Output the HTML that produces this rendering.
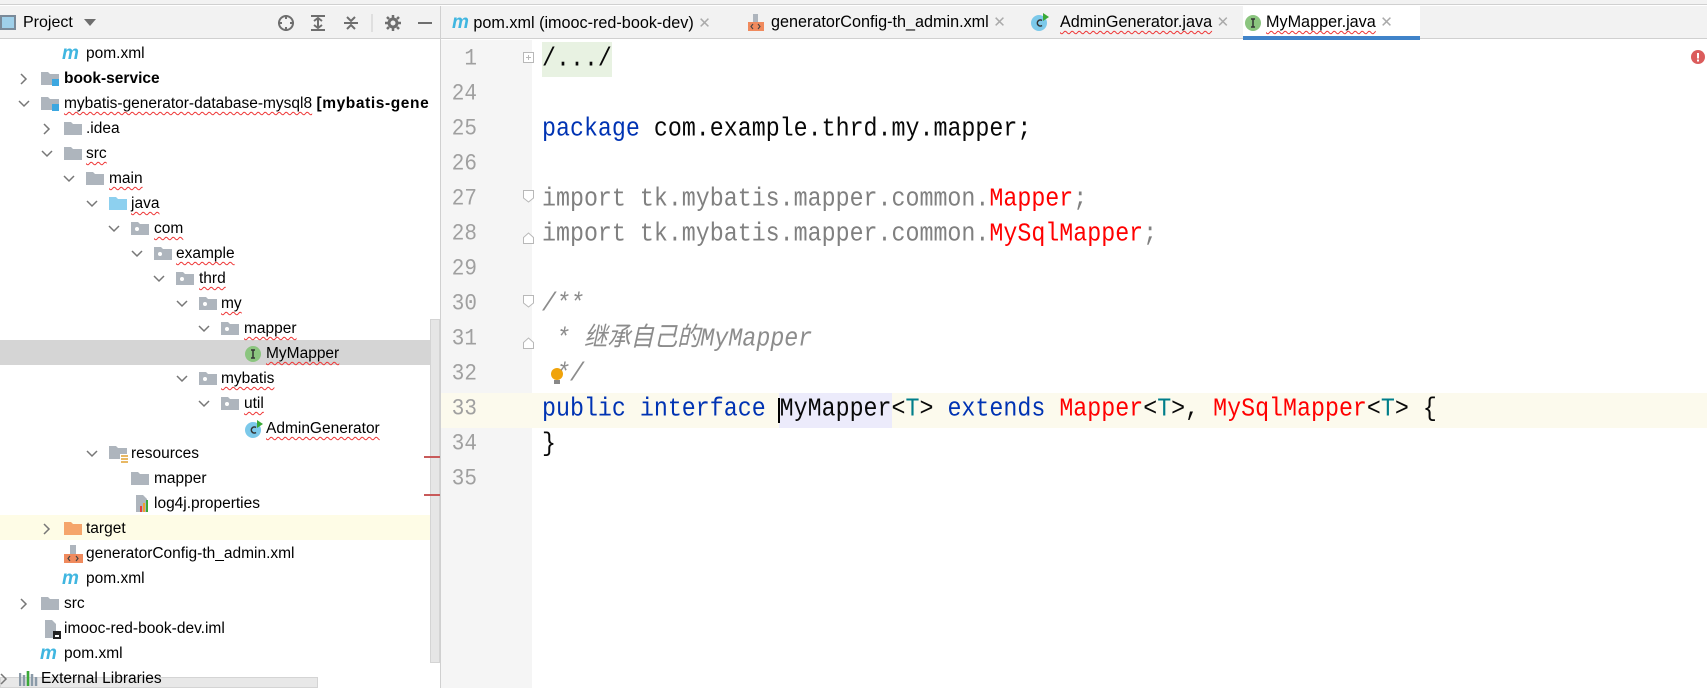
<!DOCTYPE html>
<html><head><meta charset="utf-8"><style>
*{margin:0;padding:0;box-sizing:border-box}
body{width:1707px;height:688px;overflow:hidden;background:#fff;font-family:"Liberation Sans","Noto Sans CJK SC",sans-serif;position:relative}
.a{position:absolute}
.row{position:absolute;left:0;width:430px;height:25px;font-size:15.5px;line-height:25px;color:#000;white-space:nowrap;overflow:hidden}
.row .t{position:absolute;top:0}
.row svg{position:absolute}
.sq{text-decoration:underline wavy #e33;text-decoration-thickness:1px;text-underline-offset:3px}
.ln{position:absolute;left:441px;width:36px;text-align:right;font-family:"Liberation Mono",monospace;font-size:21px;color:#a0a0a0;height:35px;line-height:35px;transform:scaleY(1.12)}
.cl{position:absolute;left:542px;font-family:"Liberation Mono","Noto Sans CJK SC",monospace;font-size:23.3px;height:35px;line-height:35px;white-space:pre;color:#080808;transform:scaleY(1.12);transform-origin:center}
.kw{color:#0033b3}.rd{color:#f00}.tp{color:#007e8a}.gr{color:#808080}.cm{color:#8c8c8c;font-style:italic}
.tab{position:absolute;top:6px;height:33px;line-height:33px;font-size:16.2px;color:#000;white-space:nowrap}
.x{color:#aaa;font-size:15px}
</style></head><body>
<div class="a" style="left:0;top:0;width:1707px;height:5px;background:#f2f2f2;border-bottom:1px solid #d0d0d0"></div>
<div class="a" style="left:0;top:6px;width:441px;height:33px;background:#f2f2f2;border-bottom:1px solid #d0d0d0"></div>
<div class="a" style="left:0;top:15px;width:16px;height:15px;border:2px solid #7a8a99;background:#9fd0ea"></div>
<div class="a" style="left:23px;top:11px;font-size:16px;line-height:24px">Project</div>
<svg class="a" style="left:84px;top:19px" width="12" height="8"><path d="M0 0L12 0L6 7Z" fill="#6e6e6e"/></svg>
<svg class="a" style="left:277px;top:14px" width="180" height="20" fill="none" stroke="#6e6e6e" stroke-width="2">
<circle cx="9" cy="9" r="7"/><path d="M9 1V5M9 13V17M1 9H5M13 9H17"/>
<path d="M34 2H48M34 16H48M37 7L41 4L45 7M37 11L41 14L45 11M41 4V14"/>
<path d="M67 9H81M70 3L74 7L78 3M70 15L74 11L78 15"/>
<path d="M95 0V18" stroke="#ccc" stroke-width="1"/>
<circle cx="116" cy="9" r="4" stroke-width="3"/><path d="M116 1V4M116 14V17M108 9H111M121 9H124M110 3L112 5M120 13L122 15M122 3L120 5M110 15L112 13" stroke-width="2.5"/>
<path d="M141 9H155"/>
</svg>
<div class="a" style="left:440px;top:6px;width:1px;height:682px;background:#d0d0d0"></div>

<div class="a" style="left:0;top:340px;width:430px;height:25px;background:#d5d5d5"></div>
<div class="a" style="left:0;top:515px;width:430px;height:25px;background:#fefce6"></div>
<div class="a" style="left:0;top:677px;width:318px;height:11px;background:#e8e8e8;border:1px solid #d4d4d4"></div>
<div class="a" style="left:430px;top:319px;width:10px;height:344px;background:#e6e6e6;border:1px solid #d4d4d4"></div>

<div class="row" style="top:41px"><span class="t" style="left:62px;color:#40b6e0;font-weight:bold;font-style:italic;font-size:19px">m</span><span class="t" style="left:86px">pom.xml</span></div>
<div class="row" style="top:66px"><svg style="left:20px;top:7px" width="8" height="12"><path d="M1 1L6 6L1 11" stroke="#777" stroke-width="1.5" fill="none"/></svg><svg style="left:41px;top:5px" width="20" height="16"><path d="M0 1H7L9 3H18V14H0Z" fill="#aeb5bd"/><rect x="11" y="8" width="7" height="7" fill="#3ca7e0"/></svg><span class="t" style="left:64px;font-weight:bold">book-service</span></div>
<div class="row" style="top:91px"><svg style="left:18px;top:9px" width="12" height="8"><path d="M1 1L6 6L11 1" stroke="#777" stroke-width="1.5" fill="none"/></svg><svg style="left:41px;top:5px" width="20" height="16"><path d="M0 1H7L9 3H18V14H0Z" fill="#aeb5bd"/><rect x="11" y="8" width="7" height="7" fill="#3ca7e0"/></svg><span class="t" style="left:64px"><span class="sq">mybatis-generator-database-mysql8</span> <b style="letter-spacing:0.6px">[mybatis-generator]</b></span></div>
<div class="row" style="top:116px"><svg style="left:43px;top:7px" width="8" height="12"><path d="M1 1L6 6L1 11" stroke="#777" stroke-width="1.5" fill="none"/></svg><svg style="left:64px;top:5px" width="20" height="16"><path d="M0 1H7L9 3H18V14H0Z" fill="#aeb5bd"/></svg><span class="t" style="left:86px">.idea</span></div>
<div class="row" style="top:141px"><svg style="left:41px;top:9px" width="12" height="8"><path d="M1 1L6 6L11 1" stroke="#777" stroke-width="1.5" fill="none"/></svg><svg style="left:64px;top:5px" width="20" height="16"><path d="M0 1H7L9 3H18V14H0Z" fill="#aeb5bd"/></svg><span class="t sq" style="left:86px">src</span></div>
<div class="row" style="top:166px"><svg style="left:63px;top:9px" width="12" height="8"><path d="M1 1L6 6L11 1" stroke="#777" stroke-width="1.5" fill="none"/></svg><svg style="left:86px;top:5px" width="20" height="16"><path d="M0 1H7L9 3H18V14H0Z" fill="#aeb5bd"/></svg><span class="t sq" style="left:109px">main</span></div>
<div class="row" style="top:191px"><svg style="left:86px;top:9px" width="12" height="8"><path d="M1 1L6 6L11 1" stroke="#777" stroke-width="1.5" fill="none"/></svg><svg style="left:109px;top:5px" width="20" height="16"><path d="M0 1H7L9 3H18V14H0Z" fill="#8dd0ef"/></svg><span class="t sq" style="left:131px">java</span></div>
<div class="row" style="top:216px"><svg style="left:108px;top:9px" width="12" height="8"><path d="M1 1L6 6L11 1" stroke="#777" stroke-width="1.5" fill="none"/></svg><svg style="left:131px;top:5px" width="20" height="16"><path d="M0 1H7L9 3H18V14H0Z" fill="#aeb5bd"/><circle cx="6" cy="8" r="2" fill="#fff"/></svg><span class="t sq" style="left:154px">com</span></div>
<div class="row" style="top:241px"><svg style="left:131px;top:9px" width="12" height="8"><path d="M1 1L6 6L11 1" stroke="#777" stroke-width="1.5" fill="none"/></svg><svg style="left:154px;top:5px" width="20" height="16"><path d="M0 1H7L9 3H18V14H0Z" fill="#aeb5bd"/><circle cx="6" cy="8" r="2" fill="#fff"/></svg><span class="t sq" style="left:176px">example</span></div>
<div class="row" style="top:266px"><svg style="left:153px;top:9px" width="12" height="8"><path d="M1 1L6 6L11 1" stroke="#777" stroke-width="1.5" fill="none"/></svg><svg style="left:176px;top:5px" width="20" height="16"><path d="M0 1H7L9 3H18V14H0Z" fill="#aeb5bd"/><circle cx="6" cy="8" r="2" fill="#fff"/></svg><span class="t sq" style="left:199px">thrd</span></div>
<div class="row" style="top:291px"><svg style="left:176px;top:9px" width="12" height="8"><path d="M1 1L6 6L11 1" stroke="#777" stroke-width="1.5" fill="none"/></svg><svg style="left:199px;top:5px" width="20" height="16"><path d="M0 1H7L9 3H18V14H0Z" fill="#aeb5bd"/><circle cx="6" cy="8" r="2" fill="#fff"/></svg><span class="t sq" style="left:221px">my</span></div>
<div class="row" style="top:316px"><svg style="left:198px;top:9px" width="12" height="8"><path d="M1 1L6 6L11 1" stroke="#777" stroke-width="1.5" fill="none"/></svg><svg style="left:221px;top:5px" width="20" height="16"><path d="M0 1H7L9 3H18V14H0Z" fill="#aeb5bd"/><circle cx="6" cy="8" r="2" fill="#fff"/></svg><span class="t sq" style="left:244px">mapper</span></div>
<div class="row" style="top:341px"><svg style="left:244px;top:4px" width="18" height="18"><circle cx="9" cy="9" r="8" fill="#8bc57f"/><path d="M7 5H11M9 5V13M7 13H11" stroke="#333" stroke-width="1.5"/></svg><span class="t sq" style="left:266px">MyMapper</span></div>
<div class="row" style="top:366px"><svg style="left:176px;top:9px" width="12" height="8"><path d="M1 1L6 6L11 1" stroke="#777" stroke-width="1.5" fill="none"/></svg><svg style="left:199px;top:5px" width="20" height="16"><path d="M0 1H7L9 3H18V14H0Z" fill="#aeb5bd"/><circle cx="6" cy="8" r="2" fill="#fff"/></svg><span class="t sq" style="left:221px">mybatis</span></div>
<div class="row" style="top:391px"><svg style="left:198px;top:9px" width="12" height="8"><path d="M1 1L6 6L11 1" stroke="#777" stroke-width="1.5" fill="none"/></svg><svg style="left:221px;top:5px" width="20" height="16"><path d="M0 1H7L9 3H18V14H0Z" fill="#aeb5bd"/><circle cx="6" cy="8" r="2" fill="#fff"/></svg><span class="t sq" style="left:244px">util</span></div>
<div class="row" style="top:416px"><svg style="left:244px;top:3px" width="20" height="20"><circle cx="9" cy="11" r="8" fill="#7cc9ea"/><path d="M12 8.5A3 3 0 1 0 12 13.5" stroke="#333" stroke-width="1.5" fill="none"/><path d="M13 1L19 5L13 9Z" fill="#3aa936"/></svg><span class="t sq" style="left:266px">AdminGenerator</span></div>
<div class="row" style="top:441px"><svg style="left:86px;top:9px" width="12" height="8"><path d="M1 1L6 6L11 1" stroke="#777" stroke-width="1.5" fill="none"/></svg><svg style="left:109px;top:4px" width="20" height="19"><path d="M0 1H7L9 3H18V14H0Z" fill="#aeb5bd"/><rect x="11" y="9" width="8" height="9" fill="#fff"/><path d="M12 11H19M12 14H19M12 17H19" stroke="#e0a030" stroke-width="1.5"/></svg><span class="t" style="left:131px">resources</span></div>
<div class="row" style="top:466px"><svg style="left:131px;top:5px" width="20" height="16"><path d="M0 1H7L9 3H18V14H0Z" fill="#aeb5bd"/></svg><span class="t" style="left:154px">mapper</span></div>
<div class="row" style="top:491px"><svg style="left:133px;top:3px" width="20" height="20"><path d="M3 1H10L14 5V18H3Z" fill="#aeb5bd"/><rect x="7" y="12" width="2" height="6" fill="#e04040"/><rect x="10" y="9" width="2" height="9" fill="#f0a030"/><rect x="13" y="6" width="2" height="12" fill="#3aa936"/></svg><span class="t" style="left:154px">log4j.properties</span></div>
<div class="row" style="top:516px"><svg style="left:43px;top:7px" width="8" height="12"><path d="M1 1L6 6L1 11" stroke="#777" stroke-width="1.5" fill="none"/></svg><svg style="left:64px;top:5px" width="20" height="16"><path d="M0 1H7L9 3H18V14H0Z" fill="#f5a56b"/></svg><span class="t" style="left:86px">target</span></div>
<div class="row" style="top:541px"><svg style="left:64px;top:3px" width="20" height="20"><path d="M6 1H12V10H6Z" fill="#aeb5bd"/><rect x="0" y="10" width="19" height="9" fill="#f08a5d"/><path d="M6 12L4 14.5L6 17M12 12L14 14.5L12 17" stroke="#444" stroke-width="1.2" fill="none"/></svg><span class="t" style="left:86px">generatorConfig-th_admin.xml</span></div>
<div class="row" style="top:566px"><span class="t" style="left:62px;color:#40b6e0;font-weight:bold;font-style:italic;font-size:19px">m</span><span class="t" style="left:86px">pom.xml</span></div>
<div class="row" style="top:591px"><svg style="left:20px;top:7px" width="8" height="12"><path d="M1 1L6 6L1 11" stroke="#777" stroke-width="1.5" fill="none"/></svg><svg style="left:41px;top:5px" width="20" height="16"><path d="M0 1H7L9 3H18V14H0Z" fill="#aeb5bd"/></svg><span class="t" style="left:64px">src</span></div>
<div class="row" style="top:616px"><svg style="left:43px;top:3px" width="20" height="20"><path d="M2 1H9L13 5V19H2Z" fill="#aeb5bd"/><rect x="10" y="12" width="8" height="8" fill="#222"/><rect x="12" y="16" width="4" height="2" fill="#fff"/></svg><span class="t" style="left:64px">imooc-red-book-dev.iml</span></div>
<div class="row" style="top:641px"><span class="t" style="left:40px;color:#40b6e0;font-weight:bold;font-style:italic;font-size:19px">m</span><span class="t" style="left:64px">pom.xml</span></div>
<div class="row" style="top:666px"><svg style="left:0px;top:7px" width="8" height="12"><path d="M1 1L6 6L1 11" stroke="#777" stroke-width="1.5" fill="none"/></svg><svg style="left:19px;top:5px" width="20" height="16"><path d="M1 2V15M5 4V15M9 0V15M13 3V15M17 6V15" stroke-width="2.5" stroke="#8a9aa8"/><path d="M9 0V15" stroke="#3aa936" stroke-width="2.5"/></svg><span class="t" style="left:41px">External Libraries</span></div>
<div class="a" style="left:424px;top:456px;width:16px;height:2px;background:#c85a5a"></div>
<div class="a" style="left:424px;top:494px;width:16px;height:2px;background:#c85a5a"></div>

<div class="a" style="left:441px;top:6px;width:1266px;height:33px;background:#f2f2f2;border-bottom:1px solid #d0d0d0"></div>
<div class="a" style="left:1243px;top:6px;width:177px;height:33px;background:#fff"></div>
<div class="a" style="left:1243px;top:36px;width:177px;height:4px;background:#4083c9"></div>
<div class="tab" style="left:452px"><span style="color:#40b6e0;font-weight:bold;font-style:italic;font-size:19px">m</span> pom.xml (imooc-red-book-dev) <span class="x">✕</span></div>
<svg class="a" style="left:748px;top:13px" width="18" height="20"><path d="M5 1H10V9H5Z" fill="#aeb5bd"/><rect x="0" y="9" width="16" height="9" fill="#f08a5d"/><path d="M5 11L3 13.5L5 16M10 11L12 13.5L10 16" stroke="#444" stroke-width="1.1" fill="none"/></svg>
<div class="tab" style="left:771px">generatorConfig-th_admin.xml <span class="x">✕</span></div>
<svg class="a" style="left:1030px;top:12px" width="20" height="20"><circle cx="9" cy="11" r="8" fill="#7cc9ea"/><path d="M12 8.5A3 3 0 1 0 12 13.5" stroke="#333" stroke-width="1.5" fill="none"/><path d="M13 1L19 5L13 9Z" fill="#3aa936"/></svg>
<div class="tab" style="left:1060px"><span class="sq">AdminGenerator.java</span> <span class="x">✕</span></div>
<svg class="a" style="left:1244px;top:14px" width="18" height="18"><circle cx="9" cy="9" r="8" fill="#8bc57f"/><path d="M7 5H11M9 5V13M7 13H11" stroke="#333" stroke-width="1.5"/></svg>
<div class="tab" style="left:1266px"><span class="sq">MyMapper.java</span> <span class="x">✕</span></div>

<div class="a" style="left:441px;top:40px;width:91px;height:648px;background:#f5f5f5"></div>
<div class="a" style="left:441px;top:393px;width:1266px;height:35px;background:#fcfaed"></div>
<div class="a" style="left:542px;top:42px;width:70px;height:35px;background:#e8f2e2"></div>
<div class="a" style="left:779px;top:393px;width:113px;height:35px;background:#ecebfb"></div>
<div class="a" style="left:778px;top:398px;width:2px;height:25px;background:#000"></div>
<svg class="a" style="left:1691px;top:50px" width="14" height="14"><circle cx="7" cy="7" r="7" fill="#db5c5c"/><rect x="6" y="3" width="2" height="5.5" fill="#fff"/><rect x="6" y="9.5" width="2" height="2" fill="#fff"/></svg>
<svg class="a" style="left:522px;top:50px" width="14" height="400" fill="#fff" stroke="#b8b8b8">
<rect x="1.5" y="2.5" width="10" height="10"/><path d="M4 7.5H9M6.5 5V10"/>
<path d="M1.5 140.5H11.5V148L6.5 152L1.5 148Z"/>
<path d="M1.5 187.5L6.5 183L11.5 187.5V193.5H1.5Z"/>
<path d="M1.5 245.5H11.5V253L6.5 257L1.5 253Z"/>
<path d="M1.5 292.5L6.5 288L11.5 292.5V298.5H1.5Z"/>
</svg>
<svg class="a" style="left:550px;top:366px" width="14" height="24"><circle cx="7" cy="8" r="6" fill="#f0a30a"/><rect x="4" y="14" width="6" height="4" fill="#888"/></svg>

<div class="ln" style="top:42px">1</div>
<div class="ln" style="top:77px">24</div>
<div class="ln" style="top:112px">25</div>
<div class="ln" style="top:147px">26</div>
<div class="ln" style="top:182px">27</div>
<div class="ln" style="top:217px">28</div>
<div class="ln" style="top:252px">29</div>
<div class="ln" style="top:287px">30</div>
<div class="ln" style="top:322px">31</div>
<div class="ln" style="top:357px">32</div>
<div class="ln" style="top:392px">33</div>
<div class="ln" style="top:427px">34</div>
<div class="ln" style="top:462px">35</div>

<div class="cl" style="top:42px">/.../</div>
<div class="cl" style="top:112px"><span class="kw">package</span> com.example.thrd.my.mapper;</div>
<div class="cl gr" style="top:182px">import tk.mybatis.mapper.common.<span class="rd">Mapper</span>;</div>
<div class="cl gr" style="top:217px">import tk.mybatis.mapper.common.<span class="rd">MySqlMapper</span>;</div>
<div class="cl cm" style="top:287px">/**</div>
<div class="cl cm" style="top:322px"> * 继承自己的MyMapper</div>
<div class="cl cm" style="top:357px"> */</div>
<div class="cl" style="top:392px"><span class="kw">public interface</span> MyMapper&lt;<span class="tp">T</span>&gt; <span class="kw">extends</span> <span class="rd">Mapper</span>&lt;<span class="tp">T</span>&gt;, <span class="rd">MySqlMapper</span>&lt;<span class="tp">T</span>&gt; {</div>
<div class="cl" style="top:427px">}</div>
</body></html>
